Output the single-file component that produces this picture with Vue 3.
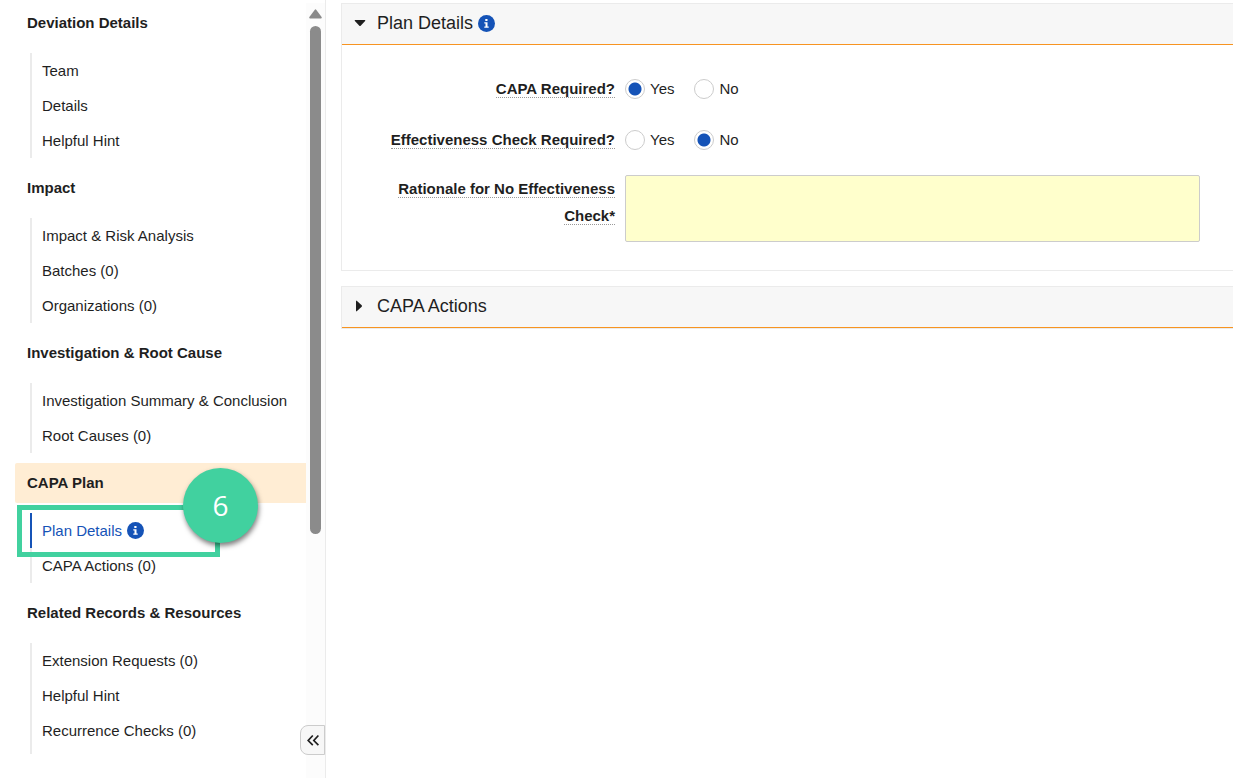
<script setup>
import { ref } from 'vue'

const sections = [
  { title: 'Deviation Details', items: ['Team', 'Details', 'Helpful Hint'] },
  { title: 'Impact', items: ['Impact & Risk Analysis', 'Batches (0)', 'Organizations (0)'] },
  { title: 'Investigation & Root Cause', items: ['Investigation Summary & Conclusion', 'Root Causes (0)'] },
  { title: 'CAPA Plan', current: true, items: ['Plan Details', 'CAPA Actions (0)'] },
  { title: 'Related Records & Resources', items: ['Extension Requests (0)', 'Helpful Hint', 'Recurrence Checks (0)'] }
]
const isActive = (section, item) => section.current && item === 'Plan Details'

const capaRequired = ref('Yes')
const checkRequired = ref('No')
const rationale = ref('')
</script>

<template>
  <div class="page">
    <aside class="sidebar">
      <nav class="nav">
        <section v-for="section in sections" :key="section.title" class="group">
          <h2 class="group-title" :class="{ current: section.current }">{{ section.title }}</h2>
          <ul class="links">
            <li v-for="item in section.items" :key="item" :class="{ active: isActive(section, item) }">
              <a href="#">{{ item }}</a>
              <svg v-if="isActive(section, item)" class="info" viewBox="0 0 17 17" aria-hidden="true">
                <circle cx="8.5" cy="8.5" r="8.5" />
                <path d="M7.3 4h2.2v2H7.3zM6.3 7.2h3.2v4.2h1.2v1.4H6.3v-1.4h1.2V8.6H6.3z" />
              </svg>
              <div v-if="isActive(section, item)" class="callout"><span class="step">6</span></div>
            </li>
          </ul>
        </section>
      </nav>
      <div class="scrollbar" aria-hidden="true">
        <svg class="scroll-up" viewBox="0 0 13 10"><path d="M5.6.9Q6.5-.3 7.4.9L12.6 8Q13.2 9.5 11.8 9.5H1.2Q-.2 9.5.4 8z" /></svg>
        <div class="thumb"></div>
      </div>
      <button class="collapse" type="button" aria-label="Collapse navigation">
        <svg viewBox="0 0 12 12" aria-hidden="true"><path d="M5.8 1.5L1.2 6.5l4.6 4.6M11.4 1.5L6.8 6.5l4.6 4.6" /></svg>
      </button>
    </aside>

    <main class="content">
      <section class="panel">
        <h1 class="panel-head">
          <svg class="caret" viewBox="0 0 12 12" aria-hidden="true"><path d="M1.2 3h9.6q1 .2.3 1L6.7 8.7q-.7.6-1.4 0L.9 4q-.7-.8.3-1z" /></svg>
          <span>Plan Details</span>
          <svg class="info" viewBox="0 0 17 17" aria-hidden="true">
            <circle cx="8.5" cy="8.5" r="8.5" />
            <path d="M7.3 4h2.2v2H7.3zM6.3 7.2h3.2v4.2h1.2v1.4H6.3v-1.4h1.2V8.6H6.3z" />
          </svg>
        </h1>
        <form class="form">
          <div id="capa-label" class="label"><span>CAPA Required?</span></div>
          <div class="choices" role="radiogroup" aria-labelledby="capa-label">
            <label v-for="option in ['Yes', 'No']" :key="option">
              <input v-model="capaRequired" type="radio" name="capa" :value="option" />{{ option }}
            </label>
          </div>
          <div id="check-label" class="label"><span>Effectiveness Check Required?</span></div>
          <div class="choices" role="radiogroup" aria-labelledby="check-label">
            <label v-for="option in ['Yes', 'No']" :key="option">
              <input v-model="checkRequired" type="radio" name="check" :value="option" />{{ option }}
            </label>
          </div>
          <label class="label" for="rationale"><span>Rationale for No Effectiveness Check*</span></label>
          <textarea id="rationale" v-model="rationale" required></textarea>
        </form>
      </section>

      <section class="panel">
        <h1 class="panel-head">
          <svg class="caret" viewBox="0 0 12 12" aria-hidden="true"><path d="M2 1.2v9.6q.2 1 1 .3l4.7-4.4q.6-.7 0-1.4L3 .9Q2.2.2 2 1.2z" /></svg>
          <span>CAPA Actions</span>
        </h1>
      </section>
    </main>
  </div>
</template>

<style>
body {
  margin: 0;
  background: #fff;
}
</style>

<style scoped>
.page {
  display: flex;
  height: 100vh;
  overflow: hidden;
  font: 15px/20px "Liberation Sans", Arial, sans-serif;
  color: #1f1f1f;
}
.page * {
  box-sizing: border-box;
}
.sidebar {
  position: relative;
  display: flex;
  flex: none;
  width: 326px;
  padding: 3px 0 0 15px;
  border-right: 1px solid #ebebeb;
}
.nav {
  flex: 1;
}
.group-title {
  margin: 0;
  padding: 0 12px;
  font-size: 15px;
  line-height: 40px;
  border-radius: 2px 0 0 2px;
}
.group-title.current {
  background: #ffedd4;
}
.links {
  margin: 10px 0 10px 15px;
  padding: 0;
  list-style: none;
}
.group:last-child .links {
  padding-bottom: 6px;
  border-left: 2px solid #ebebeb;
}
.group:last-child li {
  border-left: 0;
}
.links li {
  position: relative;
  display: flex;
  align-items: center;
  gap: 5px;
  height: 35px;
  padding-left: 10px;
  border-left: 2px solid #ebebeb;
}
.links a {
  color: inherit;
  text-decoration: none;
  white-space: nowrap;
}
.links li.active {
  color: #1553b7;
  border-color: #1553b7;
}
.info {
  flex: none;
  width: 17px;
  height: 17px;
}
.info circle {
  fill: #1553b7;
}
.info path {
  fill: #fff;
}
.callout {
  position: absolute;
  z-index: 1;
  top: -8px;
  left: -15px;
  width: 203px;
  height: 52px;
  border: 5px solid #41d19f;
  pointer-events: none;
}
.step {
  position: absolute;
  top: -42px;
  right: -43px;
  width: 75px;
  height: 75px;
  border-radius: 50%;
  background: #41d19f;
  box-shadow: 1px 3px 5px rgba(0, 0, 0, 0.5);
  color: #fff;
  font: 28px/75px "Open Sans", "Noto Sans", sans-serif;
  text-align: center;
}
.scrollbar {
  display: flex;
  flex-direction: column;
  align-items: center;
  gap: 7px;
  width: 19px;
  padding-top: 6px;
  background: #fcfcfc;
}
.scroll-up {
  flex: none;
  width: 13px;
  height: 10px;
  fill: #8b8b8b;
}
.thumb {
  flex: none;
  width: 11px;
  height: 508px;
  border-radius: 6px;
  background: #8b8b8b;
}
.collapse {
  position: absolute;
  right: 0;
  bottom: 23px;
  display: grid;
  place-items: center;
  width: 25px;
  height: 30px;
  padding: 0;
  border: 1px solid #ccc;
  border-radius: 8px 0 0 8px;
  background: #f7f7f7;
}
.collapse svg {
  width: 12px;
  height: 12px;
  fill: none;
  stroke: #1f1f1f;
  stroke-width: 1.7;
}
.content {
  flex: 1;
  min-width: 0;
  padding: 3px 0 0 15px;
}
.panel {
  margin-bottom: 15px;
  border: 1px solid #ebebeb;
  border-right: 0;
}
.panel-head {
  display: flex;
  align-items: center;
  height: 41px;
  margin: 0;
  padding: 0 12px 2px;
  border-bottom: 1px solid #f79421;
  background: #f7f7f7;
  font-size: 18px;
  font-weight: 400;
}
.caret {
  width: 12px;
  height: 12px;
  margin-right: 11px;
  fill: #1f1f1f;
}
.panel-head .info {
  margin-left: 5px;
}
.form {
  display: grid;
  grid-template-columns: 273px 1fr;
  grid-template-rows: 51px 49px auto;
  column-gap: 10px;
  padding: 30px 33px 28px 0;
}
.label {
  padding-left: 20px;
  font-weight: 700;
  line-height: 27px;
  text-align: right;
}
.label span {
  border-bottom: 1px dotted #999;
}
.choices {
  display: flex;
  gap: 20px;
}
.choices label {
  display: flex;
  align-items: center;
  gap: 5px;
  height: 27px;
}
.choices input {
  appearance: none;
  width: 20px;
  height: 20px;
  margin: 0;
  border: 1px solid #ccc;
  border-radius: 50%;
  background: #fff;
}
.choices input:checked {
  background: radial-gradient(circle, #1553b7 6px, #fff 7px);
}
textarea {
  width: 100%;
  height: 67px;
  margin: 0;
  padding: 8px;
  border: 1px solid #ccc;
  border-radius: 2px;
  background: #ffc;
  box-shadow: none;
  font: inherit;
  resize: none;
}
</style>
